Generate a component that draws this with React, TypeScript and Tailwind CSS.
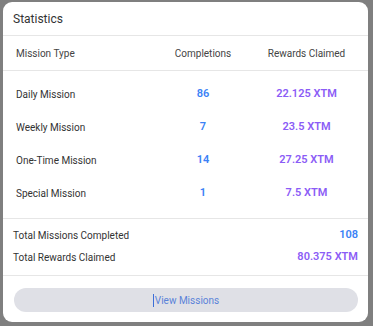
import React from 'react';

type MissionRow = {
  type: string;
  completions: number;
  rewards: string;
};

const rows: MissionRow[] = [
  { type: 'Daily Mission', completions: 86, rewards: '22.125 XTM' },
  { type: 'Weekly Mission', completions: 7, rewards: '23.5 XTM' },
  { type: 'One-Time Mission', completions: 14, rewards: '27.25 XTM' },
  { type: 'Special Mission', completions: 1, rewards: '7.5 XTM' },
];

const cols = 'grid grid-cols-[148px_94px_1fr]';

export default function App() {
  return (
    <div
      className="w-[373px] h-[326px] bg-[#7f7f7f] pt-[2px] pl-[3px]"
      style={{ fontFamily: 'Roboto, "Liberation Sans", sans-serif' }}
    >
      <div className="w-[365px] h-[320px] bg-white rounded-[9px] flex flex-col overflow-hidden">
        {/* Title */}
        <div className="h-[34px] flex items-center px-[10px] border-b border-[#e6e6e6]">
          <h2 className="text-[12px] text-[#333]">Statistics</h2>
        </div>

        {/* Table head */}
        <div className={`${cols} h-[35px] items-center px-[5px] text-[10px] text-[#444] border-b border-[#e6e6e6]`}>
          <span className="pl-[8px]">Mission Type</span>
          <span className="text-center">Completions</span>
          <span className="text-center">Rewards Claimed</span>
        </div>

        {/* Table body */}
        <div className="pt-[7px] pb-[8px] px-[5px] border-b border-[#e6e6e6]">
          {rows.map((row) => (
            <div key={row.type} className={`${cols} h-[33px] items-center`}>
              <span className="pl-[8px] text-[10px] text-[#333]">{row.type}</span>
              <span className="text-center text-[11px] font-semibold text-[#3b82f6]">{row.completions}</span>
              <span className="text-center text-[11px] font-semibold text-[#8b5cf6]">{row.rewards}</span>
            </div>
          ))}
        </div>

        {/* Totals */}
        <div className="pt-[5px] pb-[7px] px-[10px] border-b border-[#e6e6e6]">
          <div className="h-[22px] flex items-center justify-between">
            <span className="text-[10px] text-[#333]">Total Missions Completed</span>
            <span className="text-[11px] font-semibold text-[#3b82f6]">108</span>
          </div>
          <div className="h-[22px] flex items-center justify-between">
            <span className="text-[10px] text-[#333]">Total Rewards Claimed</span>
            <span className="text-[11px] font-semibold text-[#8b5cf6]">80.375 XTM</span>
          </div>
        </div>

        {/* Footer action */}
        <div className="pt-[12px] pl-[11px] pr-[10px]">
          <button className="w-full h-[24px] rounded-full bg-[#dfe0e6] flex items-center justify-center text-[10px] text-[#5a83d9]">
            <span className="w-px h-[13px] bg-[#3b6fd8] mr-px" />
            View Missions
          </button>
        </div>
      </div>
    </div>
  );
}
